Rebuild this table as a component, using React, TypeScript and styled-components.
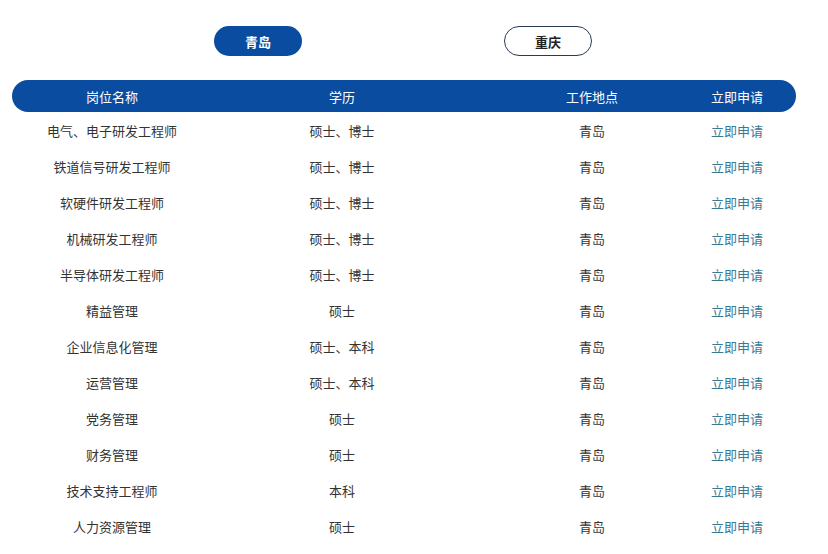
import React from "react";
import styled, { createGlobalStyle } from "styled-components";

const Global = createGlobalStyle`
  html, body { margin: 0; padding: 0; background: #fff; }
  body { font-family: "Noto Sans CJK SC", "Noto Sans", sans-serif; }
`;

const Page = styled.div`
  width: 828px;
  height: 554px;
  overflow: hidden;
  background: #fff;
`;

const Tabs = styled.div`
  display: flex;
  gap: 202px;
  padding: 26px 0 0 214px;
  height: 30px;
`;

const Tab = styled.div<{ $active?: boolean }>`
  box-sizing: border-box;
  width: 88px;
  height: 30px;
  border-radius: 15px;
  display: flex;
  align-items: center;
  justify-content: center;
  font-size: 13px;
  font-weight: 700;
  background: ${(p) => (p.$active ? "#0a4c9f" : "#fff")};
  color: ${(p) => (p.$active ? "#fff" : "#222")};
  border: ${(p) => (p.$active ? "none" : "1px solid #2a3a55")};
`;

const Table = styled.div`
  margin: 24px 0 0 12px;
  width: 784px;
`;

const cols = "200px 260px 240px 50px 1fr";

const HeaderRow = styled.div`
  display: grid;
  grid-template-columns: ${cols};
  height: 32px;
  align-items: center;
  background: #0a4c9f;
  border-radius: 16px;
  color: #fff;
  font-size: 13px;
`;

const Row = styled.div`
  display: grid;
  grid-template-columns: ${cols};
  height: 36px;
  align-items: center;
  font-size: 13px;
  color: #333;
`;

const Cell = styled.div<{ $link?: boolean }>`
  display: flex;
  justify-content: center;
  white-space: nowrap;
  color: ${(p) => (p.$link ? "#3a7898" : "inherit")};
`;

const rows: [string, string][] = [
  ["电气、电子研发工程师", "硕士、博士"],
  ["铁道信号研发工程师", "硕士、博士"],
  ["软硬件研发工程师", "硕士、博士"],
  ["机械研发工程师", "硕士、博士"],
  ["半导体研发工程师", "硕士、博士"],
  ["精益管理", "硕士"],
  ["企业信息化管理", "硕士、本科"],
  ["运营管理", "硕士、本科"],
  ["党务管理", "硕士"],
  ["财务管理", "硕士"],
  ["技术支持工程师", "本科"],
  ["人力资源管理", "硕士"],
];

export default function App() {
  return (
    <Page>
      <Global />
      <Tabs>
        <Tab $active>青岛</Tab>
        <Tab>重庆</Tab>
      </Tabs>
      <Table>
        <HeaderRow>
          <Cell>岗位名称</Cell>
          <Cell>学历</Cell>
          <Cell>工作地点</Cell>
          <Cell>立即申请</Cell>
        </HeaderRow>
        {rows.map(([name, edu]) => (
          <Row key={name}>
            <Cell>{name}</Cell>
            <Cell>{edu}</Cell>
            <Cell>青岛</Cell>
            <Cell $link>立即申请</Cell>
          </Row>
        ))}
      </Table>
    </Page>
  );
}
